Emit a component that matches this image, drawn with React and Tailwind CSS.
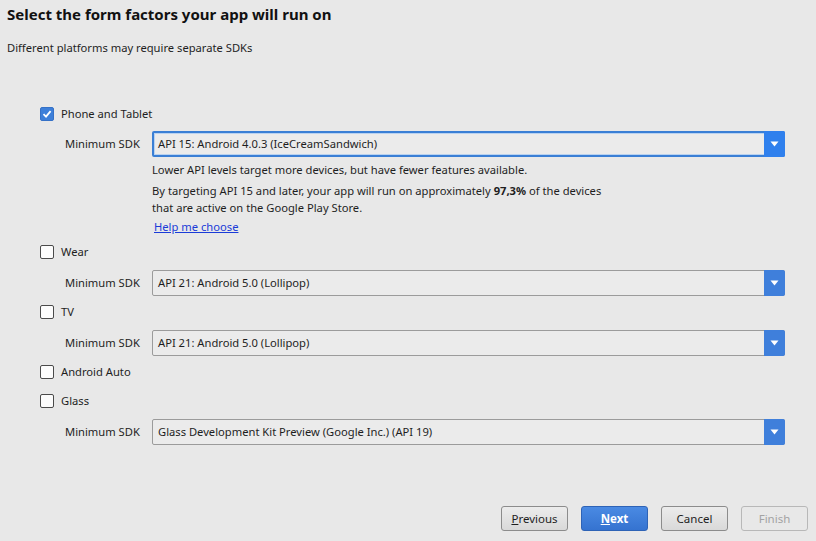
import React from 'react';

const font = { fontFamily: '"Noto Sans", "Open Sans", sans-serif' };

const Checkbox = ({ checked }) =>
  checked ? (
    <span className="w-[14px] h-[14px] rounded-[2px] bg-[#3d7fd9] border border-[#3571c7] flex items-center justify-center">
      <svg width="10" height="10" viewBox="0 0 10 10">
        <path d="M1.5 5.2 L4 7.6 L8.6 2.2" fill="none" stroke="#fff" strokeWidth="1.8" />
      </svg>
    </span>
  ) : (
    <span className="w-[14px] h-[14px] rounded-[2px] bg-[#fcfcfc] border border-[#4a4a4a]" />
  );

const CheckRow = ({ label, checked, className = '' }) => (
  <div className={`flex items-center h-[20px] pl-[40px] ${className}`}>
    <Checkbox checked={checked} />
    <span className="ml-[7px] text-[11.2px] leading-[20px] text-[#1e1e1e]">{label}</span>
  </div>
);

const SdkSelect = ({ value, focused, className = '' }) => (
  <div className={`flex items-center h-[26px] ${className}`}>
    <span className="ml-[65px] w-[87px] text-[11.2px] text-[#1e1e1e]">Minimum SDK</span>
    <div
      className={`flex-1 mr-[31px] h-full flex items-stretch rounded-[2px] bg-[#ebebeb] ${
        focused ? 'border-2 border-[#3a7fd5] shadow-[inset_0_0_0_1px_#b9d2f0]' : 'border border-[#9b9b9b]'
      }`}
    >
      <span className={`flex-1 flex items-center text-[11.2px] text-[#1e1e1e] ${focused ? 'pl-[4px]' : 'pl-[5px]'}`}>
        {value}
      </span>
      <span className={`w-[21px] flex items-center justify-center ${focused ? 'bg-[#2f80ed] -my-[2px] -mr-[2px] rounded-r-[2px]' : 'bg-[#3f7fdb] -my-px -mr-px rounded-r-[2px]'}`}>
        <svg width="9" height="6" viewBox="0 0 9 6">
          <path d="M0.5 0.5 H8.5 L4.5 5.5 Z" fill="#fff" />
        </svg>
      </span>
    </div>
  </div>
);

const Button = ({ children, variant = 'default' }) => {
  const styles = {
    default: 'border-[#8c8c8c] bg-gradient-to-b from-[#ececec] to-[#d9d9d9] text-[#1e1e1e]',
    primary: 'border-[#2e63b6] bg-gradient-to-b from-[#4a8ae3] to-[#3573d0] text-white font-bold',
    disabled: 'border-[#b8b8b8] bg-[#e8e8e8] text-[#a3a3a3]',
  };
  return (
    <button className={`w-[67px] h-[25px] rounded-[3px] border text-[11.5px] flex items-center justify-center ${styles[variant]}`}>
      {children}
    </button>
  );
};

export default function App() {
  return (
    <div className="w-[816px] h-[541px] bg-[#e8e8e8] flex flex-col overflow-hidden" style={font}>
      <h1 className="h-[28px] leading-[28px] pl-[7px] text-[15px] font-bold text-[#111]">
        Select the form factors your app will run on
      </h1>
      <p className="mt-[10px] h-[20px] leading-[20px] pl-[7px] text-[11.2px] text-[#1e1e1e]">
        Different platforms may require separate SDKs
      </p>

      <CheckRow label="Phone and Tablet" checked className="mt-[46px]" />
      <SdkSelect value="API 15: Android 4.0.3 (IceCreamSandwich)" focused className="mt-[7px]" />
      <div className="pl-[152px] text-[11.2px] text-[#1e1e1e]">
        <p className="mt-[4px] h-[18px] leading-[18px]">
          Lower API levels target more devices, but have fewer features available.
        </p>
        <p className="mt-[3px] h-[17px] leading-[17px]">
          By targeting API 15 and later, your app will run on approximately <b>97,3%</b> of the devices
        </p>
        <p className="h-[17px] leading-[17px]">that are active on the Google Play Store.</p>
        <a className="block mt-[2px] ml-[2px] h-[18px] leading-[18px] text-[#1a3bd8] underline w-fit">Help me choose</a>
      </div>

      <CheckRow label="Wear" className="mt-[6px]" />
      <SdkSelect value="API 21: Android 5.0 (Lollipop)" className="mt-[8px]" />
      <CheckRow label="TV" className="mt-[6px]" />
      <SdkSelect value="API 21: Android 5.0 (Lollipop)" className="mt-[8px]" />
      <CheckRow label="Android Auto" className="mt-[6px]" />
      <CheckRow label="Glass" className="mt-[9px]" />
      <SdkSelect value="Glass Development Kit Preview (Google Inc.) (API 19)" className="mt-[8px]" />

      <div className="mt-auto mb-[10px] flex justify-end gap-[13px] pr-[8px]">
        <Button>
          <span><u>P</u>revious</span>
        </Button>
        <Button variant="primary">
          <span><u>N</u>ext</span>
        </Button>
        <Button>Cancel</Button>
        <Button variant="disabled">Finish</Button>
      </div>
    </div>
  );
}
